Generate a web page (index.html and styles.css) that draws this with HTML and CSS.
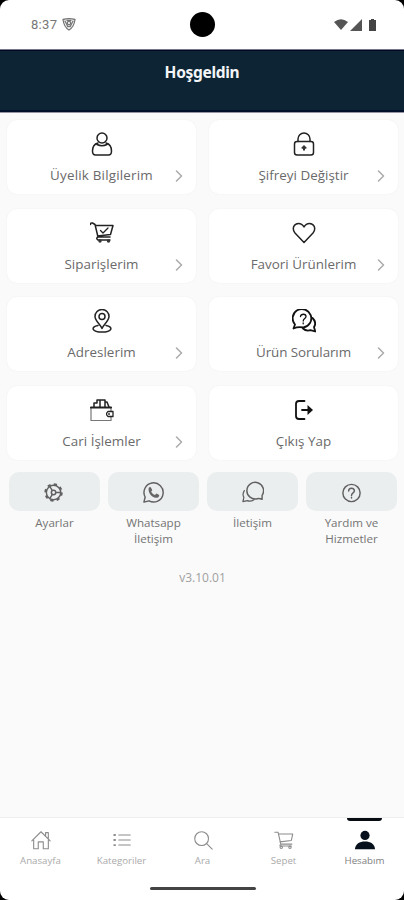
FILE: index.html
```html
<!DOCTYPE html>
<html lang="tr">
<head>
<meta charset="utf-8">
<title>Hesabım</title>
<link rel="stylesheet" href="styles.css">
</head>
<body>
<div class="phone">
  <div class="status">
    <span class="time">8:37</span>
    <svg class="shield" viewBox="0 0 14 13"><path d="M1 1.5Q7-.2 13 1.5Q12 9 7 12Q2 9 1 1.5ZM3 3l2.5 5M11 3L8.500 8M5.500 8.500h3M5 2.500h4"/><circle cx="7" cy="5" r="1.700"/></svg>
    <span class="camera"></span>
    <svg class="signals" viewBox="0 0 44 14"><path fill="#555" d="M0 4Q7-1.500 14 4L7 12ZM28 1v12H16Z"/><path fill="#444" d="M37 1h3v1h2v11h-7V2h2Z"/></svg>
  </div>
  <header class="header"><h1>Hoşgeldin</h1></header>
  <main class="main">
    <div class="cards">
      <a class="card"><svg class="icon" viewBox="0 0 24 24"><circle cx="12" cy="6" r="5"/><path d="M8 11C4 12 2.500 15 2.500 19q0 4 3 4h13q3 0 3-4c0-4-1.500-7-5.500-8M7 12.500q5 2.500 10 0"/></svg><span class="label spread">Üyelik Bilgilerim</span><svg class="chev" viewBox="0 0 8 12"><path d="M1.500 1l5 5-5 5"/></svg></a>
      <a class="card"><svg class="icon" viewBox="0 0 24 24"><rect x="2.500" y="9.500" width="19" height="13.500" rx="2.500"/><path d="M6 9.500V7a6 6 0 0 1 12 0v2.500"/><path class="solid" d="M12 13l3 3-2 1v1.500h-2V17L9 16Z"/></svg><span class="label">Şifreyi Değiştir</span><svg class="chev" viewBox="0 0 8 12"><path d="M1.500 1l5 5-5 5"/></svg></a>
      <a class="card"><svg class="icon" viewBox="0 0 24 24"><path d="M.5 3.500q0-2 2-1.500L5 3.500 8 16h12M5.500 4.500H23L20.500 13.500 7.500 15M8 16q-2.500 1.500 0 3h12"/><path class="mid" d="M10.500 9.500l2.500 2.500 5-5"/><circle class="solid" cx="10" cy="20" r="1.700"/><circle class="solid" cx="18.500" cy="20" r="1.700"/></svg><span class="label">Siparişlerim</span><svg class="chev" viewBox="0 0 8 12"><path d="M1.500 1l5 5-5 5"/></svg></a>
      <a class="card"><svg class="icon" viewBox="0 0 24 24"><path d="M12 21.500L3 12C-.5 7.500 2 2.500 6.500 2.500Q10 2.500 12 6Q14 2.500 17.500 2.500C22 2.500 24.500 7.500 21 12Z"/></svg><span class="label">Favori Ürünlerim</span><svg class="chev" viewBox="0 0 8 12"><path d="M1.500 1l5 5-5 5"/></svg></a>
      <a class="card"><svg class="icon" viewBox="0 0 24 24"><path d="M12 19.500C10 15 5 12 5 7.500a7 7 0 0 1 14 0C19 12 14 15 12 19.500Z"/><circle cx="12" cy="7.500" r="3"/><path d="M8 16.500c-8 1.500-6 6.500 4 6.500s12-5 4-6.500"/></svg><span class="label">Adreslerim</span><svg class="chev" viewBox="0 0 8 12"><path d="M1.500 1l5 5-5 5"/></svg></a>
      <a class="card"><svg class="icon bold" viewBox="0 0 24 24"><path d="M1.500 19.500L3 15.500a9.300 9.300 0 1 1 8.500 3Q6 17.500 1.500 19.500Z"/><path d="M20.500 9q4.500 4.500 1.500 9l1.200 4.500-4.700-1.300q-4.500 1.300-7.500-1.700"/><path class="mid" d="M8.500 7.500c.5-3 5.500-3 5.500 0 0 2-2.800 2-2.800 4.500m0 2v.8"/></svg><span class="label tight">Ürün Sorularım</span><svg class="chev" viewBox="0 0 8 12"><path d="M1.500 1l5 5-5 5"/></svg></a>
      <a class="card"><svg class="icon" viewBox="0 0 24 24"><path class="fine" d="M1 9.500v13h20v-4M21 13.500V9.500"/><path class="wide" d="M1 9.500h20"/><path d="M4 9V5h3V2h8v7M10 2v7M15 4h2l2 5"/><path class="mid" d="M23 13.500h-5q-3 2.500 0 5h5Z"/><circle class="solid" cx="19" cy="16" r="1"/></svg><span class="label">Cari İşlemler</span><svg class="chev" viewBox="0 0 8 12"><path d="M1.500 1l5 5-5 5"/></svg></a>
      <a class="card"><svg class="icon bold" viewBox="0 0 24 24"><path d="M12.500 3H7Q4 3 4 6v12Q4 21 7 21h5.500"/><path d="M10 12h7"/><path class="solid dark" d="M15.500 7l5.500 5-5.500 5Z"/></svg><span class="label">Çıkış Yap</span></a>
    </div>
    <div class="shortcuts">
      <a class="shortcut"><span class="tile"><svg viewBox="0 0 24 24"><circle cx="11" cy="12" r="7.500"/><circle cx="11" cy="12" r="2.300"/><circle class="teeth" cx="11" cy="12" r="8.700"/><path d="M13.300 12h5M9.800 10L7 5.500M9.800 14L7 18.500"/></svg></span><span class="cap">Ayarlar</span></a>
      <a class="shortcut"><span class="tile"><svg viewBox="0 0 24 24"><path d="M2 22l1.300-5.300A10 10 0 1 1 7.300 20.700Z"/><path class="phonefill" d="M7 7q2-2 3 1l.7 1.700-1.200 1.500q1.500 2.500 4 3.500l1.500-1.600 3 1.500q0 3-3.500 3C10 17 6 12 7 7Z"/></svg></span><span class="cap">Whatsapp<br>İletişim</span></a>
      <a class="shortcut"><span class="tile"><svg viewBox="0 0 24 24"><path d="M22 19v-4a8.700 8.700 0 1 0-5 3.500Q19 18 22 19Z"/><path class="mid" d="M3.500 10Q1 14 3 17L2 21.500l4.500-1Q10 22 13.500 19.500"/></svg></span><span class="cap">İletişim</span></a>
      <a class="shortcut"><span class="tile"><svg viewBox="0 0 24 24"><circle cx="12" cy="12.500" r="9"/><path d="M9 10.500c0-4 6-4 6 0 0 2-3 2-3 4.500m0 2v.7"/></svg></span><span class="cap">Yardım ve<br>Hizmetler</span></a>
    </div>
    <p class="version">v3.10.01</p>
  </main>
  <nav class="nav">
    <a class="tab"><svg viewBox="0 0 24 24"><path d="M2 13L12 3l10 10M4 12v9.500h5V14h5.500v7.500H20V12M17 7V4h3v6"/></svg><span>Anasayfa</span></a>
    <a class="tab"><svg viewBox="0 0 24 24"><path d="M8.500 6.500H21M8.500 12H21M8.500 17.500H21"/><path class="dots" d="M3.500 6.500h1M3.500 12h1M3.500 17.500h1"/></svg><span>Kategoriler</span></a>
    <a class="tab"><svg viewBox="0 0 24 24"><circle cx="10.500" cy="10.500" r="7.500"/><path d="M16 16l6 6"/></svg><span>Ara</span></a>
    <a class="tab"><svg viewBox="0 0 24 24"><path d="M2 3.500h3.500l3 13h12M6 5.500h15.500L20 12.500 7.500 14M8.500 16.500q-2 2 0 2H20"/><circle cx="9" cy="20" r="1.300"/><circle cx="18.500" cy="20" r="1.300"/></svg><span>Sepet</span></a>
    <a class="tab active"><svg viewBox="0 0 24 24"><circle cx="12" cy="7" r="5"/><path d="M1 22C1.500 16 6 13.500 12 13.500S22.500 16 23 22Z"/></svg><span>Hesabım</span></a>
  </nav>
  <div class="home"></div>
</div>
</body>
</html>
```
FILE: styles.css
```css
* { box-sizing: border-box; }
body { margin: 0; background: #000; font-family: "Open Sans", "Noto Sans", sans-serif; }
svg { display: block; fill: none; stroke-linecap: round; stroke-linejoin: round; }
.phone { width: 404px; height: 900px; display: flex; flex-direction: column; background: #fff; border-radius: 9px; overflow: hidden; }
.status { height: 49px; flex: none; position: relative; display: flex; align-items: center; padding: 0 26px 0 31px; }
.time { font: 13px "Roboto", sans-serif; color: #777; width: 28px; letter-spacing: .3px; }
.shield { width: 14px; height: 13px; margin-left: 3px; stroke: #777; stroke-width: 1.300; }
.camera { position: absolute; left: 190px; top: 12px; width: 25px; height: 25px; border-radius: 50%; background: #000; }
.signals { width: 44px; height: 14px; margin-left: auto; }
.header { height: 64px; flex: none; background: #0c2433; border-top: 1px solid #777587; border-bottom: 1px solid #9693a3; box-shadow: inset 0 1px #030822, inset 0 -2px #03102b; }
.header h1 { margin: 11px 0 0; font: 700 15.500px/22px "Noto Sans", sans-serif; letter-spacing: -.3px; color: #f3f5f8; text-align: center; }
.main { flex: 1; background: #fafafa; padding: 7px 6px 0 7px; }
.cards { display: grid; grid-template-columns: 189px 189px; column-gap: 13px; grid-auto-rows: 74px; row-gap: 14.600px; }
.card { position: relative; display: flex; flex-direction: column; align-items: center; background: #fff; border-radius: 10px; padding-top: 12px; box-shadow: 0 0 2px rgba(0,0,0,.06); }
.icon { width: 24px; height: 24px; stroke: #222; stroke-width: 1.500; }
.bold { stroke: #111; stroke-width: 1.800; }
.solid { fill: #333; stroke: none; }
.dark { fill: #111; }
.mid { stroke-width: 1.300; }
.fine { stroke: #777; stroke-width: 1.200; }
.wide { stroke-width: 2.200; }
.label { font-size: 13.400px; line-height: 18px; margin-top: 10px; color: #6a6a6a; white-space: nowrap; letter-spacing: .03px; }
.spread { letter-spacing: .2px; }
.tight { letter-spacing: -.1px; }
.chev { position: absolute; right: 13px; bottom: 12px; width: 8px; height: 12px; stroke: #aaa; stroke-width: 1.500; }
.shortcuts { display: grid; grid-template-columns: repeat(4, 91px); column-gap: 8px; margin: 12px 0 0 2px; }
.shortcut { display: flex; flex-direction: column; align-items: center; }
.tile { width: 91px; height: 39px; border-radius: 10px; background: #ebeeef; display: flex; align-items: center; justify-content: center; }
.tile svg { width: 23px; height: 23px; margin-top: 2px; stroke: #606060; stroke-width: 1.500; }
.tile .teeth { stroke-width: 1.800; stroke-linecap: butt; stroke-dasharray: 3.400 3.433; }
.tile .phonefill { fill: #666; stroke: none; }
.cap { margin-top: 4px; font-size: 11.600px; line-height: 16px; color: #747474; text-align: center; white-space: nowrap; }
.version { margin: 23px 0 0; font-size: 12px; line-height: 16px; text-align: center; color: #a0a0a0; }
.nav { height: 64px; flex: none; display: grid; grid-template-columns: repeat(5, 81px); border-top: 1px solid #eee; }
.tab { position: relative; display: flex; flex-direction: column; align-items: center; padding-top: 11px; font-size: 9.700px; line-height: 12px; color: #aaa; }
.tab svg { width: 22px; height: 22px; margin-bottom: 4px; stroke: #8c8c8c; stroke-width: 1.200; }
.tab .dots { stroke-width: 2; }
.active { color: #808080; }
.tab.active svg { fill: #07111d; stroke: none; }
.active::before { content: ""; position: absolute; left: 23px; top: 0; width: 35px; height: 3px; border-radius: 0 0 3px 3px; background: #070b12; }
.home { flex: none; width: 106px; height: 3px; margin: 6px 0 10px 150px; border-radius: 2px; background: #444; }
```
